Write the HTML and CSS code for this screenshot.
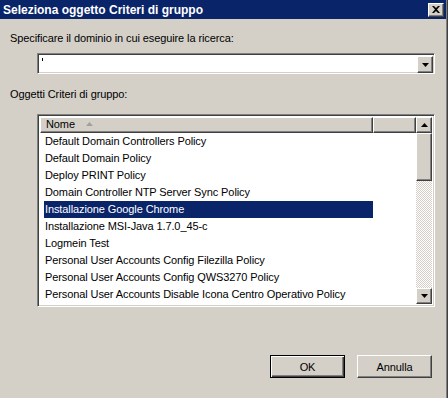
FILE: index.html
```html
<!DOCTYPE html>
<html lang="it">
<head>
    <meta charset="UTF-8">
    <title>Seleziona oggetto Criteri di gruppo</title>
    <link rel="stylesheet" href="styles.css">
</head>
<body>
    <div class="window">
        <div class="titlebar">
            <span class="title">Seleziona oggetto Criteri di gruppo</span>
            <div class="close-btn">
                <svg width="8" height="7" viewBox="0 0 8 7"><path d="M0 0h2l2 2 2-2h2L5 3.5 8 7H6L4 5 2 7H0l3-3.5z" fill="#000"/></svg>
            </div>
        </div>

        <div class="content">
            <div class="label first">Specificare il dominio in cui eseguire la ricerca:</div>
            <div class="combo sunken">
                <div class="combo-field"><span class="caret"></span></div>
                <div class="arrow-btn raised">
                    <svg width="7" height="4" viewBox="0 0 7 4"><path d="M0 0h7L3.5 4z" fill="#000"/></svg>
                </div>
            </div>

            <div class="label">Oggetti Criteri di gruppo:</div>
            <div class="listview sunken">
                <div class="lv-main">
                    <div class="lv-header">
                        <div class="col col-name raised">Nome <span class="sort">
                            <svg width="7" height="4" viewBox="0 0 7 4"><path d="M3.5 0L7 4H0z" fill="#a0a0a0"/></svg>
                        </span></div>
                        <div class="col col-rest raised"></div>
                    </div>
                    <ul class="rows">
                        <li>Default Domain Controllers Policy</li>
                        <li>Default Domain Policy</li>
                        <li>Deploy PRINT Policy</li>
                        <li>Domain Controller NTP Server Sync Policy</li>
                        <li class="selected">Installazione Google Chrome</li>
                        <li>Installazione MSI-Java 1.7.0_45-c</li>
                        <li>Logmein Test</li>
                        <li>Personal User Accounts Config Filezilla Policy</li>
                        <li>Personal User Accounts Config QWS3270 Policy</li>
                        <li>Personal User Accounts Disable Icona Centro Operativo Policy</li>
                    </ul>
                </div>
                <div class="vscroll">
                    <div class="arrow-btn raised">
                        <svg width="7" height="4" viewBox="0 0 7 4"><path d="M3.5 0L7 4H0z" fill="#000"/></svg>
                    </div>
                    <div class="thumb raised"></div>
                    <div class="track"></div>
                    <div class="arrow-btn raised">
                        <svg width="7" height="4" viewBox="0 0 7 4"><path d="M0 0h7L3.5 4z" fill="#000"/></svg>
                    </div>
                </div>
            </div>

            <div class="buttons">
                <div class="button default"><span>OK</span></div>
                <div class="button"><span>Annulla</span></div>
            </div>
        </div>
    </div>
</body>
</html>
```

FILE: styles.css
```css
html, body {
    margin: 0;
    padding: 0;
}
body {
    width: 448px;
    height: 398px;
    overflow: hidden;
    background: #d4d0c8;
    font-family: "Liberation Sans", Arial, sans-serif;
    font-size: 11px;
    letter-spacing: -0.1px;
    color: #000;
}
.window {
    width: 446px;
    height: 398px;
    border-right: 1px solid #808080;
    box-shadow: 1px 0 0 #404040;
    box-sizing: content-box;
}
.titlebar {
    height: 19px;
    background: #0a246a;
    display: flex;
    align-items: center;
    justify-content: space-between;
    padding: 0 2px 0 3px;
}
.title {
    color: #fff;
    font-weight: bold;
    font-size: 12px;
    letter-spacing: 0;
}
.close-btn {
    width: 16px;
    height: 14px;
    box-sizing: border-box;
    background: #d4d0c8;
    border: 1px solid;
    border-color: #fff #404040 #404040 #fff;
    box-shadow: inset -1px -1px 0 #808080;
    display: flex;
    align-items: center;
    justify-content: center;
}
.content {
    padding: 0 11px 0 10px;
}
.label {
    height: 14px;
    line-height: 14px;
    margin-top: 13px;
}
.label.first {
    margin-top: 12px;
}
.sunken {
    box-sizing: border-box;
    border: 1px solid;
    border-color: #808080 #fff #fff #808080;
    box-shadow: inset 1px 1px 0 #404040, inset -1px -1px 0 #d4d0c8;
}
.raised {
    box-sizing: border-box;
    background: #d4d0c8;
    border: 1px solid;
    border-color: #fff #404040 #404040 #fff;
    box-shadow: inset -1px -1px 0 #808080;
}
.combo {
    margin: 8px 0 0 27px;
    width: 398px;
    height: 21px;
    background: #fff;
    display: flex;
    padding: 2px 1px 1px 2px;
}
.combo-field {
    flex: 1;
    position: relative;
}
.caret {
    position: absolute;
    left: 2px;
    top: 2px;
    width: 1px;
    height: 3px;
    background: #000;
}
.arrow-btn {
    width: 16px;
    height: 16px;
    display: flex;
    align-items: center;
    justify-content: center;
}
.combo .arrow-btn {
    height: 17px;
}
.listview {
    margin: 13px 0 0 27px;
    width: 398px;
    height: 193px;
    background: #fff;
    display: flex;
    padding: 2px;
}
.lv-main {
    flex: 1;
    min-width: 0;
}
.lv-header {
    display: flex;
    height: 16px;
}
.col {
    height: 16px;
    line-height: 13px;
    padding-left: 5px;
    white-space: nowrap;
}
.col-name {
    width: 333px;
}
.col-rest {
    flex: 1;
}
.sort {
    display: inline-block;
    margin-left: 8px;
    vertical-align: 2px;
}
.sort svg {
    display: block;
}
.rows {
    list-style: none;
    margin: 0;
    padding: 0 0 0 4px;
}
.rows li {
    height: 17px;
    line-height: 17px;
    padding-left: 1px;
    width: 328px;
    white-space: nowrap;
}
.rows li.selected {
    background: #0a246a;
    color: #fff;
}
.vscroll {
    width: 16px;
    display: flex;
    flex-direction: column;
}
.thumb {
    height: 48px;
}
.track {
    flex: 1;
    background-color: #eae8e4;
    background-image: repeating-conic-gradient(#d4d0c8 0 25%, #fff 0 50%);
    background-size: 2px 2px;
}
.buttons {
    display: flex;
    justify-content: flex-end;
    gap: 12px;
    margin-top: 48px;
    padding-right: 3px;
}
.button {
    width: 75px;
    height: 23px;
    box-sizing: border-box;
    background: #d4d0c8;
    border: 1px solid;
    border-color: #fff #404040 #404040 #fff;
    box-shadow: inset -1px -1px 0 #808080;
    display: flex;
    align-items: center;
    justify-content: center;
}
.button.default {
    border: 1px solid #000;
    box-shadow: inset 1px 1px 0 #fff, inset -1px -1px 0 #404040, inset -2px -2px 0 #808080;
}
```
